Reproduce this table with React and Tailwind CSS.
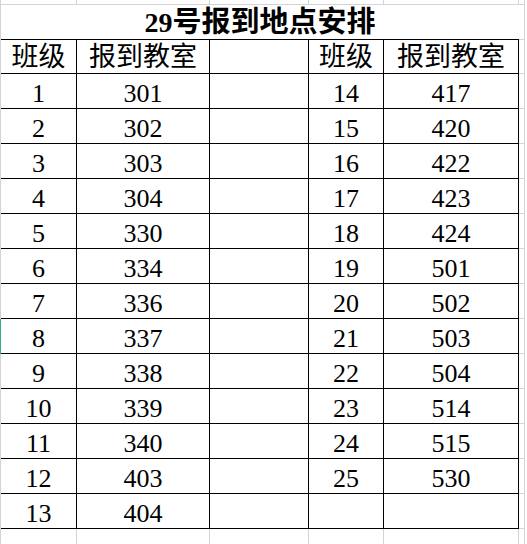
import React from "react";

const left = [
  ["1", "301"], ["2", "302"], ["3", "303"], ["4", "304"], ["5", "330"],
  ["6", "334"], ["7", "336"], ["8", "337"], ["9", "338"], ["10", "339"],
  ["11", "340"], ["12", "403"], ["13", "404"],
];

const right = [
  ["14", "417"], ["15", "420"], ["16", "422"], ["17", "423"], ["18", "424"],
  ["19", "501"], ["20", "502"], ["21", "503"], ["22", "504"], ["23", "514"],
  ["24", "515"], ["25", "530"], ["", ""],
];

// column widths incl. right border: 76 / 133 / 99 / 75 / 135, then excel gutter
const cols = ["w-[76px]", "w-[133px]", "w-[99px]", "w-[75px]", "w-[135px]"];

const Cell = ({ w, children, cjk }) => (
  <div
    className={`${w} shrink-0 h-full border-r border-b border-black flex items-end justify-center leading-none ${
      cjk ? "text-[27px] pb-[2px]" : "text-[26px] pb-[1px]"
    }`}
  >
    {children}
  </div>
);

const GrayStrip = ({ h, last }) => (
  <div className={`flex ${h}`}>
    <div className="w-px shrink-0 bg-[#d4d4d4]" />
    {cols.map((w, i) => (
      <div
        key={i}
        className={`${w} shrink-0 h-full border-r border-[#d4d4d4] ${last ? "" : "border-b"}`}
      />
    ))}
    <div className={`w-[6px] shrink-0 h-full border-r border-[#d4d4d4] ${last ? "" : "border-b"}`} />
  </div>
);

const App = () => {
  return (
    <div className="w-[527px] h-[544px] overflow-hidden bg-white text-black [font-family:'Liberation_Serif','Noto_Sans_CJK_SC',serif] flex flex-col">
      <GrayStrip h="h-[5px]" />

      {/* title */}
      <div className="flex h-[35px]">
        <div className="w-px shrink-0 bg-[#d4d4d4]" />
        <div className="w-[518px] shrink-0 border-b border-black flex items-end justify-center leading-none pb-[2px] font-bold">
          <span className="text-[28px]">29</span>
          <span className="text-[29px]">号报到地点安排</span>
        </div>
        <div className="w-[6px] shrink-0 border-b border-r border-[#d4d4d4]" />
      </div>

      {/* header */}
      <div className="flex h-[34px]">
        <div className="w-px shrink-0 bg-[#d4d4d4]" />
        <Cell w={cols[0]} cjk>班级</Cell>
        <Cell w={cols[1]} cjk>报到教室</Cell>
        <Cell w={cols[2]} />
        <Cell w={cols[3]} cjk>班级</Cell>
        <Cell w={cols[4]} cjk>报到教室</Cell>
        <div className="w-[6px] shrink-0 border-r border-b border-[#d4d4d4]" />
      </div>

      {left.map((row, i) => (
        <div key={i} className="flex h-[35px]">
          <div className={`w-px shrink-0 ${i === 7 ? "bg-[#2fb08c]" : "bg-[#d4d4d4]"}`} />
          <Cell w={cols[0]}>{row[0]}</Cell>
          <Cell w={cols[1]}>{row[1]}</Cell>
          <Cell w={cols[2]} />
          <Cell w={cols[3]}>{right[i][0]}</Cell>
          <Cell w={cols[4]}>{right[i][1]}</Cell>
          <div className="w-[6px] shrink-0 border-r border-b border-[#d4d4d4]" />
        </div>
      ))}

      <div className="flex-1 flex flex-col">
        <GrayStrip h="h-full" last />
      </div>
    </div>
  );
};

export default App;
